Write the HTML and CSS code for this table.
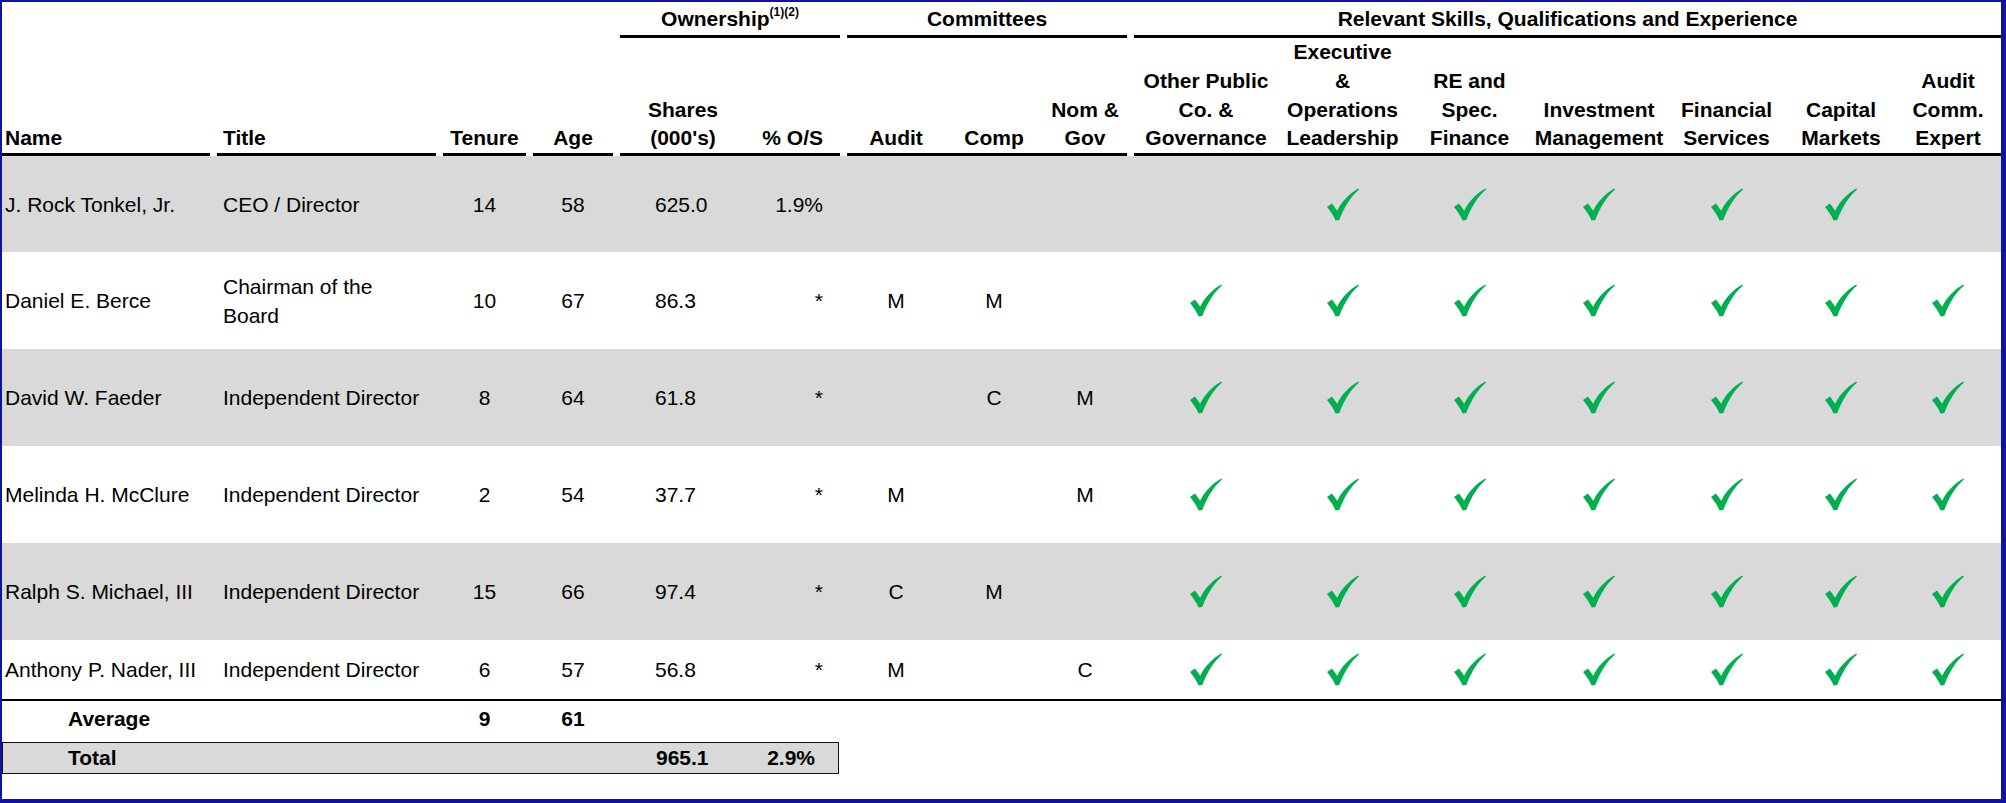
FILE: index.html
```html
<!DOCTYPE html>
<html>
<head>
<meta charset="utf-8">
<title>Board of Directors</title>
<link rel="stylesheet" href="styles.css">
</head>
<body>
<svg class="defs" width="0" height="0" aria-hidden="true">
  <symbol id="chk" viewBox="0 0 32 32">
    <path d="M0 18.5 L5 15 L10.2 22.2 C14.5 13.5 21.5 5.5 31.2 0 L32 0.9 C24 8 17.5 17.5 12.3 31.6 L8.6 32 C6.2 26.5 3.2 22.4 0 18.5 Z"/>
  </symbol>
</svg>
<div class="frame">
  <table class="board">
    <colgroup>
      <col class="c-name"><col class="c-title"><col class="c-ten"><col class="c-age">
      <col class="c-shares"><col class="c-pct">
      <col class="c-aud"><col class="c-comp"><col class="c-nom">
      <col class="c-opc"><col class="c-exec"><col class="c-re"><col class="c-inv"><col class="c-fin"><col class="c-cap"><col class="c-ace">
    </colgroup>
    <thead>
      <tr class="grp">
        <th colspan="4"></th>
        <th colspan="2" class="gap"><div class="g own">Ownership<sup>(1)(2)</sup></div></th>
        <th colspan="3" class="gap"><div class="g">Committees</div></th>
        <th colspan="7"><div class="g">Relevant Skills, Qualifications and Experience</div></th>
      </tr>
      <tr class="sub">
        <th class="gap"><div class="h l name">Name</div></th>
        <th class="gap"><div class="h l title">Title</div></th>
        <th class="gap"><div class="h">Tenure</div></th>
        <th class="gap"><div class="h">Age</div></th>
        <th><div class="h">Shares<br>(000's)</div></th>
        <th class="gap"><div class="h r pct">% O/S</div></th>
        <th><div class="h">Audit</div></th>
        <th><div class="h">Comp</div></th>
        <th class="gap"><div class="h">Nom &amp;<br>Gov</div></th>
        <th><div class="h">Other Public<br>Co. &amp;<br>Governance</div></th>
        <th><div class="h">Executive<br>&amp;<br>Operations<br>Leadership</div></th>
        <th><div class="h">RE and<br>Spec.<br>Finance</div></th>
        <th><div class="h">Investment<br>Management</div></th>
        <th><div class="h">Financial<br>Services</div></th>
        <th><div class="h">Capital<br>Markets</div></th>
        <th><div class="h">Audit<br>Comm.<br>Expert</div></th>
      </tr>
    </thead>
    <tbody>
      <tr class="row shade first">
        <td class="name gap">J. Rock Tonkel, Jr.</td>
        <td class="title gap">CEO / Director</td>
        <td class="ctr gap">14</td>
        <td class="ctr gap">58</td>
        <td class="shares">625.0</td>
        <td class="pct gap">1.9%</td>
        <td class="ctr"></td>
        <td class="ctr"></td>
        <td class="ctr gap"></td>
        <td class="ctr"></td>
        <td class="ctr"><svg class="chk"><use href="#chk"/></svg></td>
        <td class="ctr"><svg class="chk"><use href="#chk"/></svg></td>
        <td class="ctr"><svg class="chk"><use href="#chk"/></svg></td>
        <td class="ctr"><svg class="chk"><use href="#chk"/></svg></td>
        <td class="ctr"><svg class="chk"><use href="#chk"/></svg></td>
        <td class="ctr"></td>
      </tr>
      <tr class="row">
        <td class="name gap">Daniel E. Berce</td>
        <td class="title gap">Chairman of the<br>Board</td>
        <td class="ctr gap">10</td>
        <td class="ctr gap">67</td>
        <td class="shares">86.3</td>
        <td class="pct gap">*</td>
        <td class="ctr">M</td>
        <td class="ctr">M</td>
        <td class="ctr gap"></td>
        <td class="ctr"><svg class="chk"><use href="#chk"/></svg></td>
        <td class="ctr"><svg class="chk"><use href="#chk"/></svg></td>
        <td class="ctr"><svg class="chk"><use href="#chk"/></svg></td>
        <td class="ctr"><svg class="chk"><use href="#chk"/></svg></td>
        <td class="ctr"><svg class="chk"><use href="#chk"/></svg></td>
        <td class="ctr"><svg class="chk"><use href="#chk"/></svg></td>
        <td class="ctr"><svg class="chk"><use href="#chk"/></svg></td>
      </tr>
      <tr class="row shade">
        <td class="name gap">David W. Faeder</td>
        <td class="title gap">Independent Director</td>
        <td class="ctr gap">8</td>
        <td class="ctr gap">64</td>
        <td class="shares">61.8</td>
        <td class="pct gap">*</td>
        <td class="ctr"></td>
        <td class="ctr">C</td>
        <td class="ctr gap">M</td>
        <td class="ctr"><svg class="chk"><use href="#chk"/></svg></td>
        <td class="ctr"><svg class="chk"><use href="#chk"/></svg></td>
        <td class="ctr"><svg class="chk"><use href="#chk"/></svg></td>
        <td class="ctr"><svg class="chk"><use href="#chk"/></svg></td>
        <td class="ctr"><svg class="chk"><use href="#chk"/></svg></td>
        <td class="ctr"><svg class="chk"><use href="#chk"/></svg></td>
        <td class="ctr"><svg class="chk"><use href="#chk"/></svg></td>
      </tr>
      <tr class="row">
        <td class="name gap">Melinda H. McClure</td>
        <td class="title gap">Independent Director</td>
        <td class="ctr gap">2</td>
        <td class="ctr gap">54</td>
        <td class="shares">37.7</td>
        <td class="pct gap">*</td>
        <td class="ctr">M</td>
        <td class="ctr"></td>
        <td class="ctr gap">M</td>
        <td class="ctr"><svg class="chk"><use href="#chk"/></svg></td>
        <td class="ctr"><svg class="chk"><use href="#chk"/></svg></td>
        <td class="ctr"><svg class="chk"><use href="#chk"/></svg></td>
        <td class="ctr"><svg class="chk"><use href="#chk"/></svg></td>
        <td class="ctr"><svg class="chk"><use href="#chk"/></svg></td>
        <td class="ctr"><svg class="chk"><use href="#chk"/></svg></td>
        <td class="ctr"><svg class="chk"><use href="#chk"/></svg></td>
      </tr>
      <tr class="row shade">
        <td class="name gap">Ralph S. Michael, III</td>
        <td class="title gap">Independent Director</td>
        <td class="ctr gap">15</td>
        <td class="ctr gap">66</td>
        <td class="shares">97.4</td>
        <td class="pct gap">*</td>
        <td class="ctr">C</td>
        <td class="ctr">M</td>
        <td class="ctr gap"></td>
        <td class="ctr"><svg class="chk"><use href="#chk"/></svg></td>
        <td class="ctr"><svg class="chk"><use href="#chk"/></svg></td>
        <td class="ctr"><svg class="chk"><use href="#chk"/></svg></td>
        <td class="ctr"><svg class="chk"><use href="#chk"/></svg></td>
        <td class="ctr"><svg class="chk"><use href="#chk"/></svg></td>
        <td class="ctr"><svg class="chk"><use href="#chk"/></svg></td>
        <td class="ctr"><svg class="chk"><use href="#chk"/></svg></td>
      </tr>
      <tr class="row last">
        <td class="name gap">Anthony P. Nader, III</td>
        <td class="title gap">Independent Director</td>
        <td class="ctr gap">6</td>
        <td class="ctr gap">57</td>
        <td class="shares">56.8</td>
        <td class="pct gap">*</td>
        <td class="ctr">M</td>
        <td class="ctr"></td>
        <td class="ctr gap">C</td>
        <td class="ctr"><svg class="chk"><use href="#chk"/></svg></td>
        <td class="ctr"><svg class="chk"><use href="#chk"/></svg></td>
        <td class="ctr"><svg class="chk"><use href="#chk"/></svg></td>
        <td class="ctr"><svg class="chk"><use href="#chk"/></svg></td>
        <td class="ctr"><svg class="chk"><use href="#chk"/></svg></td>
        <td class="ctr"><svg class="chk"><use href="#chk"/></svg></td>
        <td class="ctr"><svg class="chk"><use href="#chk"/></svg></td>
      </tr>
      <tr class="avg">
        <td class="avg-label gap">Average</td>
        <td class="gap"></td>
        <td class="ctr gap">9</td>
        <td class="ctr gap">61</td>
        <td colspan="12"></td>
      </tr>
    </tbody>
  </table>
  <div class="total">
    <span class="t-label">Total</span>
    <span class="t-shares">965.1</span>
    <span class="t-pct">2.9%</span>
  </div>
</div>
</body>
</html>
```

FILE: styles.css
```css
html, body {
  margin: 0;
  padding: 0;
  background: #ffffff;
}

body {
  font-family: "Liberation Sans", Arial, sans-serif;
  font-size: 21px;
  color: #000;
}

.defs {
  position: absolute;
  width: 0;
  height: 0;
}

.frame {
  width: 2006px;
  height: 803px;
  box-sizing: border-box;
  border-style: solid;
  border-color: #1212a0;
  border-width: 2px 5px 4px 2px;
  overflow: hidden;
}

.board {
  table-layout: fixed;
  width: 1999px;
  border-collapse: separate;
  border-spacing: 0;
}

.c-name { width: 215px; }
.c-title { width: 226px; }
.c-ten { width: 90px; }
.c-age { width: 87px; }
.c-shares { width: 126px; }
.c-pct { width: 101px; }
.c-aud { width: 98px; }
.c-comp { width: 98px; }
.c-nom { width: 91px; }
.c-opc { width: 144px; }
.c-exec { width: 129px; }
.c-re { width: 125px; }
.c-inv { width: 134px; }
.c-fin { width: 121px; }
.c-cap { width: 108px; }
.c-ace { width: 106px; }

th, td {
  padding: 0;
  white-space: nowrap;
}

.gap {
  padding-right: 7px;
}

/* group header row */
.grp th {
  vertical-align: bottom;
  font-weight: bold;
}

.g {
  height: 33px;
  line-height: 34px;
  text-align: center;
  border-bottom: 3px solid #000;
}

.g sup {
  font-size: 12px;
  line-height: 0;
  vertical-align: 10px;
}

/* sub header row */
.sub th {
  vertical-align: bottom;
  font-weight: bold;
}

.h {
  line-height: 28.75px;
  text-align: center;
  border-bottom: 3px solid #000;
}

.h.l { text-align: left; }
.h.r { text-align: right; }
.h.name { padding-left: 3px; }
.h.title { padding-left: 6px; }
.h.pct { padding-right: 17px; }

/* body rows */
.row {
  height: 97px;
}

.row.first {
  height: 96px;
}

.row.last {
  height: 61px;
}

.row.last td {
  border-bottom: 2px solid #000;
}

.shade td {
  background: #d9d9d9;
}

td {
  vertical-align: middle;
  line-height: 29px;
}

td.name { padding-left: 3px; }
td.title { padding-left: 6px; }
td.ctr { text-align: center; }
td.shares { padding-left: 35px; }
td.pct { text-align: right; padding-right: 24px; }

.chk {
  display: block;
  width: 32px;
  height: 33px;
  margin: 0 auto;
  fill: #00b050;
}

.avg {
  height: 41px;
  font-weight: bold;
}

.avg td {
  padding-bottom: 6px;
}

.avg-label {
  padding-left: 66px;
}

/* total box */
.total {
  box-sizing: border-box;
  width: 837px;
  height: 32px;
  border: 1px solid #111;
  background: #d9d9d9;
  display: grid;
  grid-template-columns: 617px 126px 92px;
  align-items: center;
  font-weight: bold;
}

.t-label {
  padding-left: 65px;
}

.t-shares {
  padding-left: 36px;
}

.t-pct {
  text-align: right;
  padding-right: 23px;
}
```
